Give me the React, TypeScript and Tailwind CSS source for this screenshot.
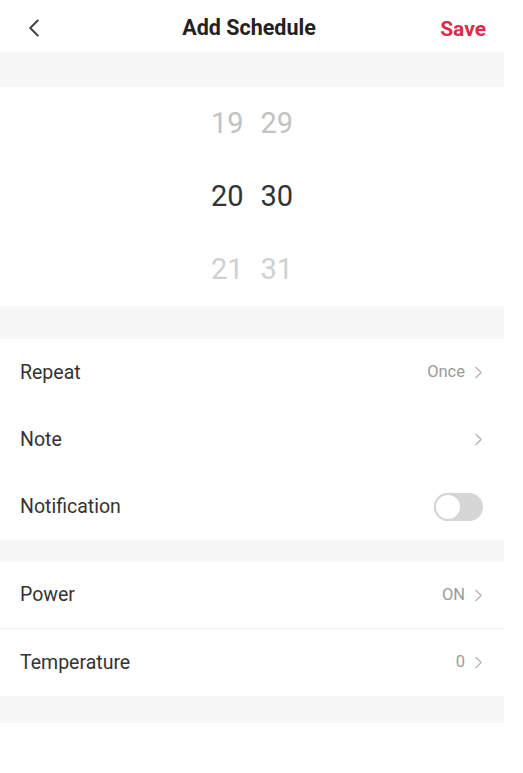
import { ChevronLeft, ChevronRight } from "lucide-react";

type RowProps = {
    label: string;
    value?: string;
    divider?: boolean;
    children?: React.ReactNode;
}

const Row = ({ label, value, divider, children }: RowProps) => {
    return (
        <div className={"flex items-center justify-between h-[67px] pl-5 pr-[19px] " + (divider ? "border-b border-[#eeeeee]" : "")}>
            <span className="text-[19.5px] text-[#333333]">{label}</span>
            {children ? children : (
                <div className="flex items-center gap-[3px]">
                    {value && <span className="text-[16.5px] text-[#9a9a9a]">{value}</span>}
                    <ChevronRight size={21} strokeWidth={1.3} className="text-[#b0b0b0] -mr-[4px]" />
                </div>
            )}
        </div>
    );
}

const Toggle = () => {
    return (
        <div className="relative w-[49px] h-[28px] mr-[2px] mt-[1px] rounded-full bg-[#d6d6d6]">
            <div className="absolute left-0 top-0 w-[28px] h-[28px] rounded-full bg-white border-2 border-[#d6d6d6]" />
        </div>
    );
}

export default function App() {
    const picker = [
        { h: "19", m: "29", color: "text-[#c2c2c2]" },
        { h: "20", m: "30", color: "text-[#333333]" },
        { h: "21", m: "31", color: "text-[#d0d0d0]" },
    ];

    return (
        <div className="w-[523px] h-[773px] bg-white" style={{ fontFamily: "Roboto, 'Liberation Sans', sans-serif" }}>
            <div className="w-[504px]">
                {/* header */}
                <div className="relative flex items-center justify-center h-[52px] pt-[4px] pr-[6px]">
                    <ChevronLeft size={30} strokeWidth={1.6} className="absolute left-[19px] top-[13px] text-[#444444]" />
                    <span className="text-[21.5px] font-bold text-[#222222]">Add Schedule</span>
                    <span className="absolute right-[18px] top-[14px] text-[21px] font-bold text-[#e0294b]">Save</span>
                </div>
                <div className="h-[35px] bg-[#f7f7f7]" />

                {/* time picker */}
                <div className="flex flex-col h-[219px]">
                    {picker.map((p) => (
                        <div key={p.h} className={"flex items-center justify-center gap-[17px] h-[73px] text-[29px] " + p.color}>
                            <span>{p.h}</span>
                            <span>{p.m}</span>
                        </div>
                    ))}
                </div>
                <div className="h-[33px] bg-[#f7f7f7]" />

                <Row label="Repeat" value="Once" />
                <Row label="Note" />
                <Row label="Notification">
                    <Toggle />
                </Row>
                <div className="h-[22px] bg-[#f7f7f7]" />

                <Row label="Power" value="ON" divider />
                <Row label="Temperature" value="0" />
                <div className="h-[27px] bg-[#f7f7f7]" />
            </div>
        </div>
    );
}
